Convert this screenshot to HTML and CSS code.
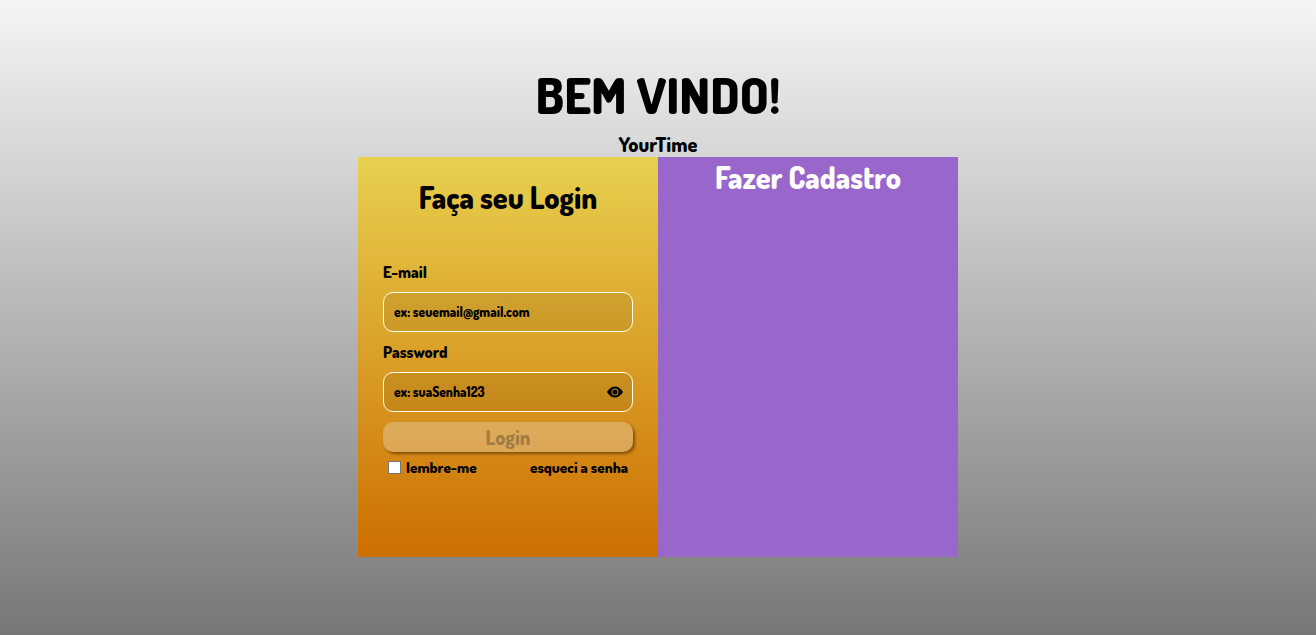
FILE: index.html
```html
<!DOCTYPE html>
<html lang="pt-BR">
<head>
  <meta charset="utf-8">
  <meta name="viewport" content="width=device-width, initial-scale=1">
  <title>YourTime</title>
  <link rel="stylesheet" href="styles.css">
</head>
<body>
  <header class="welcome">
    <h1 class="welcome-title">BEM VINDO!</h1>
    <p class="brand">YourTime</p>
  </header>
  <main class="card">
    <section class="login">
      <h2 class="login-title">Faça seu Login</h2>
      <form class="form">
        <label class="label" for="email">E-mail</label>
        <div class="field">
          <input class="input" id="email" type="email" placeholder="ex: seuemail@gmail.com">
        </div>
        <label class="label" for="password">Password</label>
        <div class="field">
          <input class="input" id="password" type="password" placeholder="ex: suaSenha123">
          <button class="reveal" type="button" aria-label="Mostrar senha">
            <svg class="eye" viewBox="0 0 16 16" aria-hidden="true">
              <path d="M10.5 8a2.5 2.5 0 1 1-5 0 2.5 2.5 0 0 1 5 0z"/>
              <path d="M0 8s3-5.500 8-5.500S16 8 16 8s-3 5.500-8 5.500S0 8 0 8zm8 3.500a3.500 3.500 0 1 0 0-7 3.500 3.500 0 0 0 0 7z"/>
            </svg>
          </button>
        </div>
        <button class="submit" type="submit" disabled>Login</button>
        <div class="options">
          <label class="remember"><input class="check" type="checkbox">lembre-me</label>
          <a class="forgot" href="#">esqueci a senha</a>
        </div>
      </form>
    </section>
    <section class="signup">
      <h2 class="signup-title">Fazer Cadastro</h2>
    </section>
  </main>
</body>
</html>
```
FILE: styles.css
```css
* {
  box-sizing: border-box;
  margin: 0;
  padding: 0;
}

body {
  min-height: 100vh;
  padding-bottom: 22px;
  display: flex;
  flex-direction: column;
  align-items: center;
  justify-content: center;
  font-family: Dosis, Lato, "Open Sans", sans-serif;
  font-weight: 800;
  color: #000;
  background: linear-gradient(#f5f5f5, #777);
}

.welcome {
  padding-bottom: 2px;
  text-align: center;
}

.welcome-title {
  font-size: 50px;
  font-weight: 800;
  line-height: 76px;
}

.brand {
  font-size: 20px;
  line-height: 22px;
}

.card {
  display: grid;
  grid-template-columns: 1fr 1fr;
  width: 100%;
  max-width: 600px;
  min-height: 400px;
}

.login {
  padding: 20px 25px;
  background: linear-gradient(#e8d04e, #cc6e00);
}

.login-title,
.signup-title {
  font-size: 30px;
  font-weight: 800;
  line-height: 40px;
  text-align: center;
}

.form {
  display: flex;
  flex-direction: column;
  margin-top: 35px;
}

.label {
  font-size: 16px;
  line-height: 40px;
}

.field {
  display: flex;
  align-items: center;
  height: 40px;
  padding: 0 9px 0 10px;
  border: 1px solid #fffff0;
  border-radius: 10px;
  background: rgba(0, 0, 0, 0.07);
}

.input {
  flex: 1;
  min-width: 0;
  border: 0;
  outline: 0;
  background: none;
  font-family: inherit;
  font-weight: inherit;
  color: #000;
}

.input::placeholder {
  color: #000;
  opacity: 1;
}

.reveal {
  display: flex;
  border: 0;
  background: none;
  cursor: pointer;
}

.eye {
  width: 16px;
  height: 16px;
}

.submit {
  height: 30px;
  margin-top: 10px;
  border: 0;
  border-radius: 10px;
  background: rgba(239, 239, 239, 0.3);
  box-shadow: 2px 2px 3px rgba(80, 40, 0, 0.6);
  font: inherit;
  font-size: 20px;
  color: rgba(16, 16, 16, 0.3);
}

.options {
  display: flex;
  align-items: center;
  justify-content: space-between;
  padding: 0 5px;
  font-size: 15px;
  line-height: 32px;
}

.remember {
  display: flex;
  align-items: center;
  gap: 5px;
}

.check {
  appearance: none;
  width: 13px;
  height: 13px;
  border: 1px solid #767676;
  background: #fff;
}

.check:checked {
  background: #9966cc;
}

.forgot {
  color: inherit;
  text-decoration: none;
}

.signup {
  background: #9966cc;
}

.signup-title {
  color: #fff;
}
```
